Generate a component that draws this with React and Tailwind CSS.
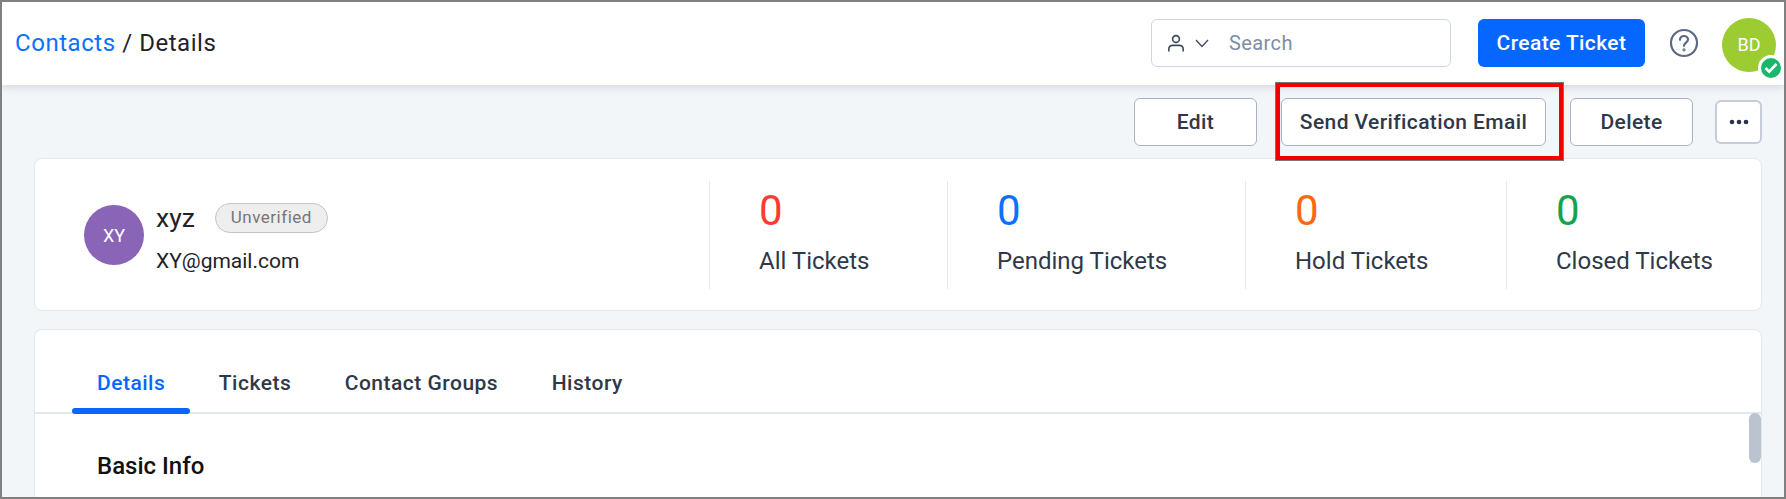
import React from 'react';

const stats = [
  { label: 'All Tickets', color: 'text-[#ff3b30]', width: 'w-[238px]' },
  { label: 'Pending Tickets', color: 'text-[#0a72ff]', width: 'w-[298px]' },
  { label: 'Hold Tickets', color: 'text-[#f96a0e]', width: 'w-[261px]' },
  { label: 'Closed Tickets', color: 'text-[#16a34f]', width: 'flex-1' },
];

const tabs = ['Details', 'Tickets', 'Contact Groups', 'History'];

const UserIcon = () => (
  <svg width="18" height="18" viewBox="0 0 18 18" fill="none" stroke="#3d4a5f" strokeWidth="1.6">
    <circle cx="9" cy="5" r="3.4" />
    <path d="M1.8 17.5v-2.2c0-2.4 1.6-3.9 4-3.9h6.4c2.4 0 4 1.5 4 3.9v2.2" />
  </svg>
);

const Chevron = () => (
  <svg width="14" height="9" viewBox="0 0 14 9" fill="none" stroke="#3d4a5f" strokeWidth="1.3">
    <path d="M1 1l6 6.5L13 1" />
  </svg>
);

const HelpIcon = () => (
  <svg width="30" height="30" viewBox="0 0 30 30" fill="none" stroke="#5b6a84" strokeWidth="2.2" strokeLinecap="round">
    <circle cx="15" cy="15" r="13" />
    <path d="M11 11.8c0-2.3 1.8-3.8 4-3.8s4 1.5 4 3.6c0 3-4 3-4 6.2" />
    <circle cx="15" cy="21.8" r="0.5" fill="#5b6a84" />
  </svg>
);

const ActionButton = ({ children, className = '' }) => (
  <button className={`h-12 rounded-md border border-[#a9b3c6] bg-white pt-[2px] text-[21px] font-medium tracking-[0.4px] text-[#2f3849] ${className}`}>
    {children}
  </button>
);

export default function App() {
  return (
    <div className="flex h-[499px] w-full flex-col overflow-hidden border-2 border-[#808080] bg-[#f3f6f9] font-['Roboto',sans-serif]">
      {/* Top bar */}
      <div className="relative z-10 flex h-[83px] shrink-0 items-center bg-white pb-[1px] pl-[13px] pr-[8px] shadow-[0_2px_8px_rgba(50,70,100,0.18)]">
        <div className="flex-1 text-[24px] font-normal tracking-[0.55px] text-[#1f2329]">
          <span className="text-[#0a72ff]">Contacts</span> / Details
        </div>
        <div className="flex h-12 w-[300px] items-center rounded-md border border-[#cfd6e3] pl-[15px]">
          <UserIcon />
          <span className="ml-[10px]"><Chevron /></span>
          <span className="ml-[20px] text-[20px] tracking-[0.4px] text-[#7d8da6]">Search</span>
        </div>
        <button className="ml-[27px] h-12 w-[167px] rounded-md bg-[#0567ff] pt-[2px] text-[21px] font-medium tracking-[0.4px] text-white">
          Create Ticket
        </button>
        <div className="ml-[24px]"><HelpIcon /></div>
        <div className="relative ml-[23px] mt-[3px] flex h-[54px] w-[54px] items-center justify-center rounded-full bg-[#9ccc32] text-[18px] text-white">
          BD
          <span className="absolute bottom-[-9px] right-[-8px] flex h-[26px] w-[26px] items-center justify-center rounded-full border-[3px] border-white bg-[#1ab76c]">
            <svg width="14" height="12" viewBox="0 0 14 12" fill="none" stroke="white" strokeWidth="2.6">
              <path d="M1.5 6l3.7 3.7L12.5 2" />
            </svg>
          </span>
        </div>
      </div>

      {/* Action buttons */}
      <div className="relative z-20 flex items-center justify-end pt-[13px] pr-[22px]">
        <ActionButton className="w-[123px]">Edit</ActionButton>
        <div className="relative ml-[24px]">
          <ActionButton className="w-[265px]">Send Verification Email</ActionButton>
          <div className="pointer-events-none absolute top-[-15px] right-[-17px] bottom-[-14px] left-[-5px] border-4 border-[#f00000] outline outline-1 outline-[#777777]" />
        </div>
        <ActionButton className="ml-[24px] w-[123px]">Delete</ActionButton>
        <button className="ml-[22px] flex h-11 w-[47px] items-center justify-center rounded-md border-2 border-[#c5ccda] bg-white">
          <svg width="20" height="6" viewBox="0 0 20 6" fill="#2a3347">
            <circle cx="3" cy="3" r="2.3" />
            <circle cx="10" cy="3" r="2.3" />
            <circle cx="17" cy="3" r="2.3" />
          </svg>
        </button>
      </div>

      {/* Contact summary */}
      <div className="mt-3 ml-[32px] mr-[22px] flex h-[153px] shrink-0 items-start rounded-lg border border-[#e2e8f0] bg-white pt-[22px]">
        <div className="flex h-[108px] w-[674px] items-center pl-[49px]">
          <div className="flex h-[60px] w-[60px] items-center justify-center rounded-full bg-[#8a64b7] text-[18px] text-white">
            XY
          </div>
          <div className="ml-3 pt-[5px]">
            <div className="flex items-center">
              <span className="text-[26.5px] leading-[30px] text-[#1f2329]">xyz</span>
              <span className="ml-[20px] flex h-[30px] w-[113px] items-center justify-center rounded-full border border-[#c4c4c4] bg-[#eeeeee] text-[17px] tracking-[0.5px] text-[#777777]">
                Unverified
              </span>
            </div>
            <div className="mt-[16px] text-[21px] leading-[24px] text-[#1f2329]">XY@gmail.com</div>
          </div>
        </div>
        {stats.map((stat) => (
          <div key={stat.label} className={`h-[108px] border-l border-[#e2e8f0] pl-[49px] pt-[1px] ${stat.width}`}>
            <div className={`text-[42px] leading-[58px] ${stat.color}`}>0</div>
            <div className="mt-[6px] text-[24px] leading-[30px] text-[#2f3849]">{stat.label}</div>
          </div>
        ))}
      </div>

      {/* Tabs */}
      <div className="relative mt-[18px] ml-[32px] mr-[22px] flex-1 rounded-t-lg border border-b-0 border-[#e2e8f0] bg-white">
        <div className="mt-[35px] flex h-[49px] gap-[3.5px] border-b-2 border-[#e2e8f0] pl-[37px]">
          {tabs.map((tab, index) => (
            <div
              key={tab}
              className={`relative px-[25px] text-[21px] font-medium leading-[36px] tracking-[0.5px] ${index === 0 ? 'text-[#0567ff]' : 'text-[#2f3849]'}`}
            >
              {tab}
              {index === 0 && <span className="absolute right-0 bottom-[-2px] left-0 h-[6px] rounded-full bg-[#0567ff]" />}
            </div>
          ))}
        </div>
        <div className="mt-[38px] pl-[62px] text-[24px] font-medium leading-[28px] text-[#111111]">Basic Info</div>
        <div className="absolute top-[83px] right-0 h-[50px] w-3 rounded-full bg-[#bcc3d0]" />
      </div>
    </div>
  );
}
